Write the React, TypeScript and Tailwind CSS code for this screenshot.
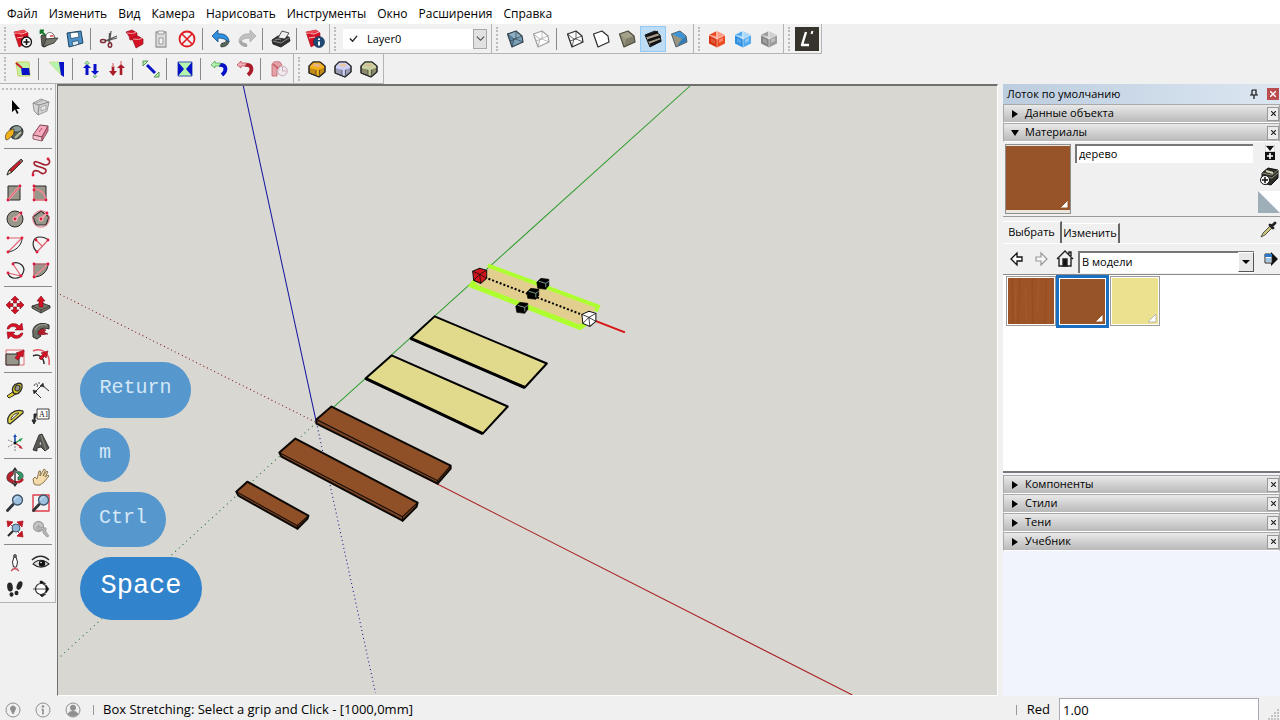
import { useState, type ReactNode } from "react";

const MENU = [
  "Файл",
  "Изменить",
  "Вид",
  "Камера",
  "Нарисовать",
  "Инструменты",
  "Окно",
  "Расширения",
  "Справка",
];

type Tool = { label: string; icon: ReactNode; active?: boolean };
type ToolGroup = Tool[][];

const RED = "#d41224";
const INK = "#2b2b2b";

/* ---------- shared icon pieces, all on a 24px grid ---------- */

function Svg({ children, className = "size-6" }: { children: ReactNode; className?: string }) {
  return (
    <svg viewBox="0 0 24 24" className={className} fill="none" stroke={INK} strokeLinejoin="round" aria-hidden="true">
      {children}
    </svg>
  );
}

// Small round handles that mark the picked points of the drawing tools.
function Dots({ at }: { at: [number, number][] }) {
  return (
    <>
      {at.map(([x, y]) => (
        <circle key={`${x}-${y}`} cx={x} cy={y} r="1.4" fill="#e0183c" stroke="none" />
      ))}
    </>
  );
}

type StyleCubeProps = { top: string; side: string; right: string; line?: string; wire?: boolean };

function StyleCube({ top, side, right, line = INK, wire }: StyleCubeProps) {
  return (
    <Svg>
      <path d="M4.500 7 13 4 19 9 20 15 9 20Z" fill={side} stroke="none" />
      <path d="M4.500 7 13 4 19 9 11 12Z" fill={top} stroke="none" />
      <path d="M11 12 19 9 20 15 9 20Z" fill={right} stroke="none" />
      {wire && <path d="M4.500 7 11 12 19 9M11 12 9 20M13 4V12L20 15M13 12 7 14" stroke={line} strokeWidth=".7" />}
      <path d="M4.500 7 13 4 19 9 20 15 9 20Z" stroke={line} strokeWidth="1.2" />
    </Svg>
  );
}

function GlassBox({ dark, mid, light }: { dark: string; mid: string; light: string }) {
  return (
    <Svg>
      <g stroke="none">
        <path d="M12 4 20 8 12 12 4 8Z" fill={light} />
        <path d="M4 8 12 12V20.500L4 16.500Z" fill={dark} />
        <path d="M20 8 12 12V20.500L20 16.500Z" fill={mid} />
        <path d="M4 8 11 4.500V9Z" fill={mid} />
        <path d="M14 12.500 18 10.500V14L14 16Z" fill={light} opacity=".7" />
        <path d="M6 11 10 13V17L6 15Z" fill={light} opacity=".35" />
      </g>
      <path d="M12 4V20M4 8 12 12 20 8" stroke="#fff" strokeOpacity=".6" strokeWidth=".8" />
    </Svg>
  );
}

function RoundedBox({ top, side, edge }: { top: string; side: string; edge: string }) {
  return (
    <Svg>
      <path d="M4 9 8 5H15L20 9V15L14 20 4 16Z" fill={side} />
      <path d="M6 9 9 6H14L18 9 13 11Z" fill={top} stroke={edge} strokeWidth="1.600" />
      <path d="M12.500 12V18.500M12 11.500 5 10M13 11.500 19 9.500" stroke={edge} strokeWidth="2.400" />
      <path d="M11 13V18.500M14.500 13V18.500" strokeWidth=".6" />
      <path d="M4 9 8 5H15L20 9V15L14 20 4 16Z" strokeWidth="1.100" />
    </Svg>
  );
}

function Doc({ children }: { children?: ReactNode }) {
  return (
    <Svg>
      <path d="M3 5 13 3 17 6V15L8 20 6 14Z" fill={RED} stroke="#a50f1f" strokeWidth=".6" />
      <path d="M3 6 11 7 16 5M6 11 12 10" stroke="#ffd6d8" strokeWidth=".9" />
      <path d="M3 5 13 3 15 4.500 6 7Z" fill="#ee4a55" stroke="none" />
      {children}
    </Svg>
  );
}

function Magnifier({ frame }: { frame?: ReactNode }) {
  return (
    <Svg>
      {frame}
      <path d="M4.500 19.500 10 13.500" stroke="#30343a" strokeWidth="2.800" strokeLinecap="round" />
      <circle cx="14.500" cy="9" r="5" fill="#9dc0df" stroke="#3f5468" strokeWidth="1.300" />
      <path d="M11.500 9C12 7 13 6 15 6" stroke="#dceaf5" />
    </Svg>
  );
}

/* ---------- toolbars ---------- */

const FILE_GROUP: ToolGroup = [
  [
    {
      label: "Создать",
      icon: (
        <Doc>
          <circle cx="15.500" cy="15" r="5" fill="#fff" stroke="#111" strokeWidth="1.300" />
          <path d="M12.500 15H18.500M15.500 12V18" stroke="#111" strokeWidth="1.600" />
        </Doc>
      ),
    },
    {
      label: "Открыть",
      icon: (
        <Svg>
          <path d="M4 9 5 8H9L16 7 18 11 8 20 5 19Z" fill="#5f5f57" strokeWidth=".8" />
          <path d="M9 8C11 4 17 4 18 12H9Z" fill="#fff" strokeWidth=".6" />
          <path d="M13 8 16 8 17 10 13 10Z" fill="#e87070" stroke="none" />
          <path d="M6 20 9 12 21 11 17 16Z" fill="#77776c" strokeWidth=".8" />
          <path d="M8 8 4 4M3.500 7V3.500H7" stroke="#167a2a" strokeWidth="1.800" />
        </Svg>
      ),
    },
    {
      label: "Сохранить",
      icon: (
        <Svg>
          <path d="M4 6 18 4 20 16 6 20Z" fill="#4c8fc9" stroke="#1f4460" />
          <path d="M7 6 15 5 16 10 8 11.500Z" fill="#fff" stroke="#1f4460" strokeWidth=".7" />
          <path d="M9 15 15 13.500 16 17 10 19Z" fill="#dceaf4" stroke="#1f4460" strokeWidth=".7" />
        </Svg>
      ),
    },
  ],
  [
    {
      label: "Вырезать",
      icon: (
        <Svg>
          <path d="M8 14 20 9M12.500 16 14 4M9 14 20 11M12 15 12.500 6" stroke="#555" strokeWidth="1.200" />
          <ellipse cx="6" cy="14" rx="2.500" ry="1.600" stroke="#7c2b35" strokeWidth="1.500" />
          <ellipse cx="13" cy="18" rx="1.700" ry="2.300" stroke="#7c2b35" strokeWidth="1.500" />
        </Svg>
      ),
    },
    {
      label: "Копировать",
      icon: (
        <Svg>
          <path d="M3 5 9 3 14 6V12L7 13 6 9Z" fill={RED} stroke="#8f1020" strokeWidth=".7" />
          <path d="M9 11 15 9 20 12V17L13 21 11 16Z" fill={RED} stroke="#8f1020" strokeWidth=".7" />
          <path d="M4 6 9 6.500 13 5.500M10 12 15 12.500 19 11.500" stroke="#ffd0d3" strokeWidth=".7" />
        </Svg>
      ),
    },
    {
      label: "Вставить",
      icon: (
        <Svg>
          <path d="M7 5H17V20H7Z" fill="#dcdcdc" stroke="#9a9a9a" strokeWidth="1.300" />
          <path d="M9 4H15V7H9ZM10 11H14V17H10Z" fill="#f3f3f3" stroke="#9a9a9a" />
        </Svg>
      ),
    },
    {
      label: "Стереть",
      icon: (
        <Svg>
          <circle cx="12" cy="12" r="7.500" stroke="#e01b22" strokeWidth="1.800" />
          <path d="M7 7 17 17M17 7 7 17" stroke="#e01b22" strokeWidth="1.600" />
        </Svg>
      ),
    },
  ],
  [
    {
      label: "Отменить",
      icon: (
        <Svg>
          <path d="M20 14C20 18 16 20 12 20 11 18 12 17 13 16 16 16 17 15 17 13Z" fill="#55675a" stroke="#333" strokeWidth=".6" />
          <path d="M3 9 9 3V7C15 6 20 9 20 15 17 12 13 11 9 11V15Z" fill="#2f8fe0" stroke="#1b4e80" strokeWidth=".8" />
        </Svg>
      ),
    },
    {
      label: "Вернуть",
      icon: (
        <Svg>
          <path d="M4 14C4 18 8 20 12 20 13 18 12 17 11 16 8 16 7 15 7 13Z" fill="#a8a8a8" stroke="none" />
          <path d="M21 9 15 3V7C9 6 4 9 4 15 7 12 11 11 15 11V15Z" fill="#c0c0c0" stroke="#a8a8a8" strokeWidth=".7" />
        </Svg>
      ),
    },
  ],
  [
    {
      label: "Печать",
      icon: (
        <Svg>
          <path d="M3 13 9 9 20 10 21 14 12 20 4 17Z" fill="#2f2f2f" />
          <path d="M9 11 13 4 20 6 16 12Z" fill="#eee" strokeWidth=".8" />
          <path d="M4 14 12 16 20 11" stroke="#9a9a9a" strokeWidth=".9" />
          <path d="M6 13 9 12 12 13" stroke="#888" strokeWidth="1.200" />
        </Svg>
      ),
    },
  ],
  [
    {
      label: "Информация о модели",
      icon: (
        <Doc>
          <circle cx="16" cy="15" r="5.500" fill="#1d4973" stroke="#12304e" strokeWidth=".6" />
          <path d="M16 14.500V18.500M16 11.500V13" stroke="#fff" strokeWidth="2" />
        </Doc>
      ),
    },
  ],
];

const FACE_GROUP: ToolGroup = [
  [
    { label: "Рентген", icon: <StyleCube top="#8fb0c4" side="#5c87a3" right="#7ba1b8" line="#34434d" wire /> },
    { label: "Задние кромки", icon: <StyleCube top="#fff" side="#f7f7f7" right="#fff" line="#a0a0a0" wire /> },
  ],
  [
    { label: "Каркас", icon: <StyleCube top="#fff" side="#f7f7f7" right="#fff" wire /> },
    { label: "Скрытые линии", icon: <StyleCube top="#fff" side="#fff" right="#fff" /> },
    { label: "Тонированный", icon: <StyleCube top="#a5a18b" side="#98947e" right="#817d68" line="#4c4a3e" /> },
    {
      label: "Тонированный с текстурами",
      active: true,
      icon: (
        <Svg>
          <path d="M4 8 14 4 19 8 20 14 9 20Z" fill="#a89d8c" stroke="#111" />
          <path d="M5 9 17 5M7 13.500 19 9.500M9 18 20 13.500" stroke="#111" strokeWidth="2.600" />
        </Svg>
      ),
    },
    {
      label: "Монохромный",
      icon: (
        <Svg>
          <path d="M4.500 7 13 4 19 9 20 15 9 20Z" fill="#9a9580" stroke="#4b5b66" />
          <path d="M5 7 13 4.500 18.500 9 15 12Z" fill="#3c93d8" stroke="none" />
          <path d="M10 19 15 12 19 9.500 19.500 14.500Z" fill="#2f7cb8" stroke="none" />
        </Svg>
      ),
    },
  ],
];

const BOX_GROUP: ToolGroup = [
  [
    { label: "Красный блок", icon: <GlassBox dark="#d8330f" mid="#ee4a22" light="#ff9d84" /> },
    { label: "Синий блок", icon: <GlassBox dark="#2c8ede" mid="#4fa9ee" light="#a9d8fb" /> },
    { label: "Серый блок", icon: <GlassBox dark="#858585" mid="#9c9c9c" light="#cfcfcf" /> },
  ],
];

const LIBRARY_GROUP: ToolGroup = [
  [
    {
      label: "Библиотека",
      icon: (
        <Svg>
          <rect width="24" height="24" fill="#35332c" stroke="none" />
          <path d="M11 5 7 18H14" stroke="#fff" strokeWidth="2.400" />
          <path d="M17.500 4 16.500 7" stroke="#fff" strokeWidth="2" />
        </Svg>
      ),
    },
  ],
];

const BLUE = "#0712c8";
const MINT = "#b4f5ae";

const PLUGIN_GROUP: ToolGroup = [
  [
    {
      label: "Box Stretching",
      icon: (
        <Svg>
          <path d="M5 5H18L19 19H7Z" fill="#c4f3a6" stroke="#c8c84a" strokeWidth=".8" />
          <path d="M10 11H18L19 18H11Z" fill={BLUE} stroke="none" />
          <path d="M11 11 5 6" stroke="#c4202c" strokeWidth="2.200" />
        </Svg>
      ),
    },
  ],
  [
    {
      label: "Растянуть грань",
      icon: (
        <Svg>
          <path d="M4 5H14L16 18Z" fill={MINT} stroke="#c9c95e" strokeWidth=".5" />
          <path d="M14 5H19V20L16 18Z" fill={BLUE} stroke="none" />
        </Svg>
      ),
    },
  ],
  [
    {
      label: "Поднять",
      icon: (
        <Svg>
          <path d="M8 18V9M16 7V15" stroke={BLUE} strokeWidth="3" />
          <path d="M4 11 8 7 12 11ZM12 14 16 18 20 14Z" fill={BLUE} stroke="none" />
          <path d="M6 6 8 4 10 6V7H6ZM14 19 16 21 18 19Z" fill={MINT} stroke="#6fae6f" strokeWidth=".8" />
        </Svg>
      ),
    },
    {
      label: "Опустить",
      icon: (
        <Svg>
          <path d="M8 9V15M16 11V18" stroke="#a81d29" strokeWidth="2.600" />
          <path d="M4 14 8 19 12 14ZM12 11 16 7 20 11Z" fill="#a81d29" stroke="none" />
          <path d="M8 6V10M16 4V7" stroke="#e89a9f" strokeWidth="1.800" />
        </Svg>
      ),
    },
  ],
  [
    {
      label: "По диагонали",
      icon: (
        <Svg>
          <path d="M8 8 16 16" stroke={BLUE} strokeWidth="3" />
          <path d="M4 4H9L4 9ZM20 20H15L20 15Z" fill={MINT} stroke="#4a8a4a" strokeWidth=".9" />
        </Svg>
      ),
    },
  ],
  [
    {
      label: "Отразить",
      icon: (
        <Svg>
          <path d="M5 5H19V19H5Z" fill={MINT} stroke="#3d53b5" />
          <path d="M5 5 11 12 5 19ZM19 5 13 12 19 19Z" fill={BLUE} stroke="none" />
        </Svg>
      ),
    },
  ],
  [
    {
      label: "Повернуть влево",
      icon: (
        <Svg>
          <path d="M12 8C20 7 20 14 15 18" stroke={BLUE} strokeWidth="3.800" />
          <path d="M4 8 8 4V6L14 6 12 9 8 9V11Z" fill={MINT} stroke="#4a9a4a" strokeWidth=".7" />
        </Svg>
      ),
    },
    {
      label: "Повернуть вправо",
      icon: (
        <Svg>
          <path d="M12 8C20 7 20 14 15 18" stroke="#a81d29" strokeWidth="3.800" />
          <path d="M4 8 8 4V6L14 6 12 9 8 9V11Z" fill="#f5b0b5" stroke="#b5404a" strokeWidth=".7" />
        </Svg>
      ),
    },
  ],
  [
    {
      label: "Изогнуть",
      icon: (
        <Svg>
          <path d="M5 19V8C5 5 8 4 13 5L15 8 10 11V19Z" fill="#e3a3a8" stroke="#c7606a" strokeWidth=".8" />
          <path d="M6 7 13 13" stroke="#c7505c" strokeWidth="1.400" />
          <circle cx="15.500" cy="14" r="4.800" fill="#f0e8ef" fillOpacity=".8" stroke="#c9a9b9" />
          <path d="M15.500 14V10M15.500 14H19" stroke="#c9a9b9" />
        </Svg>
      ),
    },
  ],
];

const CORNER_GROUP: ToolGroup = [
  [
    { label: "Скругление углов", icon: <RoundedBox top="#e7b48c" side="#c08a14" edge="#f3b21c" /> },
    { label: "Острые углы", icon: <RoundedBox top="#e8c7a4" side="#9c9cb8" edge="#cdd3fb" /> },
    { label: "Фаска", icon: <RoundedBox top="#d6bf98" side="#8b8b6c" edge="#c9d3a0" /> },
  ],
];

const DRAW_TOOLS: ToolGroup = [
  [
    {
      label: "Выбрать",
      icon: (
        <Svg>
          <path d="M9 5V17L12 14.500 14 19 15.500 18 13.500 14H17Z" fill="#000" stroke="none" />
        </Svg>
      ),
    },
    {
      label: "Создать компонент",
      icon: (
        <Svg>
          <path d="M4 8 12 4 20 7 18 16 9 20 5 16Z" fill="#d4d4d4" stroke="#999" />
          <path d="M4 8 10 10 20 7M10 10 9 20" stroke="#8f8f8f" strokeWidth="1.200" />
          <path d="M7 8 14 5M12 12 17 10V14L12 16Z" fill="#e8e8e8" stroke="#999" strokeWidth=".8" />
        </Svg>
      ),
    },
    {
      label: "Заливка",
      icon: (
        <Svg>
          <path d="M7 8C10 3 19 4 20 10 20 16 14 20 9 17Z" fill="#56605c" />
          <path d="M8 9C9 4 17 3 19 8 17 12 12 12 8 9Z" fill="#8b9d9c" strokeWidth=".8" />
          <path d="M11 8C11 11 11 14 9 15 7 16 6 19 3 19 1 14 4 9 11 8Z" fill="#f0b018" strokeWidth=".6" />
          <path d="M12 17 18 11" stroke="#b9c0a0" strokeWidth="2" />
        </Svg>
      ),
    },
    {
      label: "Ластик",
      icon: (
        <Svg>
          <path d="M4 14 11 4 19 5 13 16Z" fill="#f7a9bc" stroke="#7b4450" />
          <path d="M4 14 13 16V20L4 18Z" fill="#f7c2d0" stroke="#7b4450" strokeWidth=".8" />
          <path d="M13 16 19 5V10L13 20Z" fill="#d8738c" stroke="#7b4450" strokeWidth=".8" />
          <path d="M10 11 13 7" stroke="#b04a64" />
        </Svg>
      ),
    },
  ],
  [
    {
      label: "Линия",
      icon: (
        <Svg>
          <path d="M4 20 6 15 18 4 20 6 9 17Z" fill="#c51f2b" strokeWidth=".9" />
          <path d="M4 20 6 15 9 17Z" fill="#d8c9a5" strokeWidth=".8" />
          <path d="M17 5 19 7" stroke="#777" strokeWidth="1.600" />
        </Svg>
      ),
    },
    {
      label: "От руки",
      icon: (
        <Svg>
          <path d="M4 20C3 14 9 15 12 18 15 20 19 16 16 14 11 11 5 12 5 8 6 4 13 10 17 10 22 9 21 5 19 4" stroke="#a3202e" strokeWidth="1.600" />
          <Dots at={[[4, 20], [19, 4]]} />
        </Svg>
      ),
    },
    {
      label: "Прямоугольник",
      icon: (
        <Svg>
          <path d="M5 5H17V19H5Z" fill="#99978a" />
          <path d="M5 19 17 5" stroke="#f5a3ac" strokeWidth="2.400" />
          <path d="M5 19 17 5" stroke="#c5303e" strokeWidth=".7" />
          <Dots at={[[5, 19], [17, 5]]} />
        </Svg>
      ),
    },
    {
      label: "Повёрнутый прямоугольник",
      icon: (
        <Svg>
          <path d="M5 5H17V19H5Z" fill="#99978a" />
          <path d="M5 8C11 8 16 12 17 19M5 5V19H17" stroke="#f58a96" strokeWidth="1.500" />
          <Dots at={[[5, 5], [5, 9], [5, 19], [17, 19]]} />
        </Svg>
      ),
    },
    {
      label: "Круг",
      icon: (
        <Svg>
          <circle cx="12" cy="12" r="8" fill="#99978a" />
          <path d="M12 12 18 6" stroke="#f5a3ac" strokeWidth="2.200" />
          <circle cx="12" cy="12" r="2.500" fill="#f7b6bd" stroke="none" />
          <Dots at={[[12, 12], [18, 6]]} />
        </Svg>
      ),
    },
    {
      label: "Многоугольник",
      icon: (
        <Svg>
          <path d="M12 4 20 10 17 18H7L4 10Z" fill="#99978a" strokeWidth="1.200" />
          <circle cx="12" cy="12" r="8.200" stroke="#e0606e" strokeWidth=".9" />
          <path d="M12 12 18 6" stroke="#f5a3ac" strokeWidth="2.200" />
          <circle cx="12" cy="12" r="2.500" fill="#f7b6bd" stroke="none" />
          <Dots at={[[12, 12], [18, 6]]} />
        </Svg>
      ),
    },
    {
      label: "Дуга",
      icon: (
        <Svg>
          <path d="M19 5C19 12 13 18 5 19" />
          <path d="M5 5H19L5 19" stroke="#e0606e" strokeWidth="1.100" />
          <Dots at={[[5, 5], [19, 5], [5, 19]]} />
        </Svg>
      ),
    },
    {
      label: "Дуга по двум точкам",
      icon: (
        <Svg>
          <path d="M8 19C2 13 3 4 11 4 15 4 17 5 19 7" strokeWidth="1.200" />
          <path d="M8 19 19 7M7 7 13 13" stroke="#e0606e" strokeWidth="1.200" />
          <Dots at={[[8, 19], [19, 7], [7, 7]]} />
        </Svg>
      ),
    },
    {
      label: "Дуга по трём точкам",
      icon: (
        <Svg>
          <path d="M10 4C17 2 23 8 20 14 17 21 7 21 5 14" strokeWidth="1.200" />
          <path d="M10 5 18 17 5 14" stroke="#e0606e" strokeWidth="1.200" />
          <Dots at={[[10, 5], [18, 17], [5, 14]]} />
        </Svg>
      ),
    },
    {
      label: "Сектор",
      icon: (
        <Svg>
          <path d="M5 5H19C19 12 13 18 5 18Z" fill="#99978a" />
          <path d="M5 5H19L5 18Z" stroke="#f58a96" strokeWidth="1.200" />
          <Dots at={[[5, 5], [19, 5], [5, 18]]} />
        </Svg>
      ),
    },
  ],
  [
    {
      label: "Переместить",
      icon: (
        <Svg>
          <path d="M12 3 16 7H13.500V10H10.500V7H8ZM12 21 16 17H13.500V14H10.500V17H8ZM3 12 7 8V10.500H10V13.500H7V16ZM21 12 17 8V10.500H14V13.500H17V16Z" fill={RED} stroke="#7d0c18" strokeWidth=".6" />
        </Svg>
      ),
    },
    {
      label: "Тяни/Толкай",
      icon: (
        <Svg>
          <path d="M3 13 13 10 21 13V15L12 20 3 15Z" fill="#77776a" strokeWidth=".9" />
          <path d="M3 13 12 17 21 13M12 17V20" strokeWidth=".7" />
          <path d="M12 3 16 8H14V14H10V8H8Z" fill={RED} stroke="#7d0c18" strokeWidth=".6" />
        </Svg>
      ),
    },
    {
      label: "Повернуть",
      icon: (
        <Svg>
          <path d="M4 10C5 4 13 3 16 7L19 4 20 11 12 11 14 9C11 7 8 7 6 10Z" fill={RED} stroke="#7d0c18" strokeWidth=".5" />
          <path d="M20 14C19 20 11 21 8 17L5 20 4 13 12 13 10 15C13 17 16 17 18 14Z" fill={RED} stroke="#7d0c18" strokeWidth=".5" />
        </Svg>
      ),
    },
    {
      label: "Ведение",
      icon: (
        <Svg>
          <path d="M4 15C2 6 12 2 20 6L20 10C14 8 9 10 9 15L12 17 8 20 4 18Z" fill="#6c6e65" />
          <path d="M6 11C8 6 13 5 18 6" stroke="#a9a99c" />
          <path d="M9 14C10 10 14 9 17 11L15 13 19 15 11 16Z" fill="#b51c29" stroke="#5c0d14" strokeWidth=".5" />
        </Svg>
      ),
    },
    {
      label: "Масштаб",
      icon: (
        <Svg>
          <path d="M3 5H21V20H3Z" stroke="#e46a72" />
          <path d="M3 9H16V20H3Z" fill="#98968a" />
          <path d="M12 13 15 9 13 8 21 5 20 12 18 11 15 15Z" fill={RED} stroke="#7d0c18" strokeWidth=".6" />
        </Svg>
      ),
    },
    {
      label: "Смещение",
      icon: (
        <Svg>
          <path d="M4 6C13 2 22 9 20 20" stroke="#e2545e" strokeWidth="1.500" />
          <path d="M4 11C10 8 15 13 15 19" strokeWidth="1.400" />
          <path d="M10 13 14 9 12 8 19 6 17 13 16 11 12 15Z" fill={RED} stroke="#7d0c18" strokeWidth=".6" />
        </Svg>
      ),
    },
  ],
  [
    {
      label: "Рулетка",
      icon: (
        <Svg>
          <path d="M4 17 11 12 13 15 6 19Z" fill="#e5d32c" />
          <path d="M10 8C12 4 18 3 19 6 20 10 16 15 13 15 9 15 9 10 10 8Z" fill="#d6c52c" strokeWidth="1.300" />
          <ellipse cx="14.500" cy="9" rx="2.300" ry="3" fill="#9a9a8f" transform="rotate(30 14.500 9)" />
        </Svg>
      ),
    },
    {
      label: "Размеры",
      icon: (
        <Svg>
          <path d="M6 13 13 6M6 13 12 19M13 6 20 12" strokeWidth="1" />
          <path d="M5 7C6 3 10 5 8 8M9 4 11 4" strokeWidth=".8" />
          <path d="M14 4 15 8 11 7ZM5 15 4 11 8 12Z" fill={INK} strokeWidth=".5" />
        </Svg>
      ),
    },
    {
      label: "Транспортир",
      icon: (
        <Svg>
          <path d="M5 18C3 11 11 3 20 6L20 8 7 19Z" fill="#ddd04a" strokeWidth="1.200" />
          <path d="M8 15C8 11 12 8 16 8Z" fill="#f2f2f2" strokeWidth=".9" />
        </Svg>
      ),
    },
    {
      label: "Текст",
      icon: (
        <Svg>
          <path d="M8 4H20V14H8Z" fill="#fff" strokeWidth=".9" />
          <path d="M8 9H5V18M3 15 5 19 7 15Z" fill={INK} />
          <text x="10" y="12" fontSize="8" stroke="none" fill="#111" fontFamily="Liberation Serif, serif">
            A1
          </text>
        </Svg>
      ),
    },
    {
      label: "Оси",
      icon: (
        <Svg>
          <path d="M12 12V5" stroke="#1c4fae" strokeWidth="1.600" />
          <path d="M12 12 18 16" stroke="#bf2b35" strokeWidth="1.400" />
          <path d="M12 12 17 9" stroke="#249c50" strokeWidth="1.400" />
          <path d="M12 12 5 16M12 12 5 9M12 12V20" stroke="#666" strokeDasharray="2 1" strokeWidth=".8" />
          <path d="M10 6 12 3 14 6Z" fill="#1c4fae" stroke="none" />
          <path d="M17 14 20 18 16 17Z" fill="#bf2b35" stroke="none" />
          <path d="M16 8 20 7 17 11Z" fill="#249c50" stroke="none" />
          <circle cx="12" cy="12" r="1.300" fill="#111" stroke="none" />
        </Svg>
      ),
    },
    {
      label: "Объёмный текст",
      icon: (
        <Svg>
          <path d="M10 4 13 3 20 17 16 20 12 16 8 17V20L4 19Z" fill="#5a5a54" strokeWidth=".9" />
          <path d="M10 14 11 9 13 14Z" fill="#ddd" strokeWidth=".6" />
          <path d="M12 4 17 19" stroke="#8c8c80" />
        </Svg>
      ),
    },
  ],
  [
    {
      label: "Орбита",
      icon: (
        <Svg>
          <path d="M13 7C19 5 22 11 19 14L15 15V12L17 11Z" fill="#2f9b66" strokeWidth=".6" />
          <path d="M11 6C5 6 2 12 5 16L10 19V15L7 13 10 10Z" fill="#b6222e" strokeWidth=".6" />
          <path d="M9 16C14 18 18 17 20 14" stroke="#b6222e" strokeWidth="2.400" />
          <path d="M12 3V21M10 6 12 3 14 6M10 18 12 21 14 18" strokeWidth="1.300" />
        </Svg>
      ),
    },
    {
      label: "Панорама",
      icon: (
        <Svg>
          <path d="M5 19 4 14 6 12 8 14 10 6 11.500 6 11 11 15 4 16.500 5 14 11 18 6 19 7 16 12 19 10 20 11 15 17 11 20 7 20Z" fill="#f5dcab" stroke="#806a45" strokeWidth=".9" />
        </Svg>
      ),
    },
    { label: "Лупа", icon: <Magnifier /> },
    {
      label: "Окно масштаба",
      icon: <Magnifier frame={<path d="M4 4H20V20H4Z" stroke="#dc3e4c" strokeWidth="1.400" />} />,
    },
    {
      label: "В размер окна",
      icon: (
        <Svg>
          <path d="M5 19 10 14" strokeWidth="2.200" />
          <circle cx="13" cy="11" r="4" fill="#91b5d4" stroke="#3f5468" />
          <path d="M4 4 10 5 5 10ZM20 4 19 10 14 5ZM20 20 14 19 19 14ZM6 6 9 9M18 6 16 8M18 18 15 15" fill="#c11c2a" stroke="#c11c2a" strokeWidth=".9" />
        </Svg>
      ),
    },
    {
      label: "Предыдущий вид",
      icon: (
        <Svg>
          <circle cx="9.500" cy="9.500" r="5" fill="#c6c6c6" stroke="#a4a4a4" strokeWidth="1.300" />
          <path d="M7 11 10 8V10L17 11V15L20 19 18 20 14 16 14 13H10V14Z" fill="#b4b4b4" stroke="#9a9a9a" strokeWidth=".8" />
        </Svg>
      ),
    },
  ],
  [
    {
      label: "Положение камеры",
      icon: (
        <Svg>
          <path d="M11 6H13L14.500 11 13.500 16H10.500L9.500 11Z" fill="#fff" />
          <circle cx="12" cy="5" r="1.400" fill="#888" strokeWidth=".8" />
          <path d="M8 20 12 17 16 20M9 18H15" stroke="#c94b55" strokeWidth="1.200" />
        </Svg>
      ),
    },
    {
      label: "Осмотреться",
      icon: (
        <Svg>
          <path d="M3 9C8 4 15 4 20 9" strokeWidth="1.600" />
          <path d="M4 13C8 8 15 8 20 13 15 17 9 17 4 13Z" fill="#ddd" strokeWidth="1.200" />
          <circle cx="13" cy="12.500" r="3.200" fill="#111" stroke="none" />
          <circle cx="12" cy="11.500" r=".8" fill="#fff" stroke="none" />
        </Svg>
      ),
    },
    {
      label: "Прогулка",
      icon: (
        <Svg>
          <g fill="#272727" stroke="none">
            <ellipse cx="7" cy="10" rx="2.800" ry="4.500" transform="rotate(-8 7 10)" />
            <ellipse cx="8.500" cy="17.500" rx="2" ry="2.200" />
            <ellipse cx="16.500" cy="8.500" rx="2.600" ry="4.500" transform="rotate(22 16.500 8.500)" />
            <ellipse cx="13.500" cy="16" rx="2" ry="2.200" />
          </g>
        </Svg>
      ),
    },
    {
      label: "Сечение",
      icon: (
        <Svg>
          <circle cx="12" cy="12" r="5.500" fill="#fff" strokeWidth="1.200" />
          <path d="M4 12H19" strokeWidth=".8" />
          <path d="M11 4 13 4 17 7 11 6ZM17 8 20 12 17 16ZM11 18 17 17 13 20Z" fill="#111" strokeWidth=".5" />
        </Svg>
      ),
    },
  ],
];

function ToolButton({ tool }: { tool: Tool }) {
  return (
    <button
      type="button"
      aria-label={tool.label}
      aria-pressed={tool.active}
      className={
        tool.active
          ? "flex size-[26px] items-center justify-center border border-[#90c8f6] bg-[#bfdcf5]"
          : "flex size-[26px] items-center justify-center"
      }
    >
      {tool.icon}
    </button>
  );
}

function Grip() {
  return <span className="mr-1 ml-1 h-6 w-[2px] border-l-2 border-dotted border-[#bcbcbc]" />;
}

function Toolbar({ groups }: { groups: ToolGroup }) {
  return (
    <div role="toolbar" className="flex h-[30px] items-center border-r border-b border-[#b4b4b4] bg-[#f1f1f1] pr-px">
      <Grip />
      {groups.map((tools, i) => (
        <div key={i} className="flex items-center">
          {i > 0 && <span className="mr-[5px] ml-[2px] h-[22px] w-px bg-[#8a8a8a]" />}
          {tools.map((tool) => (
            <ToolButton key={tool.label} tool={tool} />
          ))}
        </div>
      ))}
    </div>
  );
}

function LayerPicker() {
  return (
    <div className="flex h-[30px] items-center border-r border-b border-[#b4b4b4] bg-[#f1f1f1] pr-1">
      <Grip />
      <div className="relative ml-[3px] flex h-5 w-36 items-center bg-white">
        <svg viewBox="0 0 10 10" className="pointer-events-none absolute left-[6px] size-[9px]" fill="none" stroke="#222" strokeWidth="1.400" aria-hidden="true">
          <path d="M1 5 4 8 9 2" />
        </svg>
        <select aria-label="Слой" className="h-5 w-full appearance-none bg-transparent pt-px pl-6 text-[11px]">
          <option>Layer0</option>
        </select>
        <span className="pointer-events-none absolute right-0 flex h-5 w-[14px] items-center justify-center border border-[#a8a8a8] bg-[#e1e1e1]">
          <svg viewBox="0 0 10 10" className="size-[9px]" fill="none" stroke="#444" strokeWidth="1.200" aria-hidden="true">
            <path d="M1 3 5 7 9 3" />
          </svg>
        </span>
      </div>
    </div>
  );
}

function ToolPalette() {
  return (
    <aside className="w-[57px] shrink-0 bg-[#f0f0f0]">
      <div role="toolbar" className="w-14 border-r border-b border-[#b4b4b4] bg-[#f3f3f3] pl-[2px]">
        <div className="flex h-[10px] items-center">
          <span className="h-[2px] w-[50px] border-t-2 border-dotted border-[#bcbcbc]" />
        </div>
        {DRAW_TOOLS.map((tools, i) => (
          <div key={i}>
            {i > 0 && (
              <div className="flex h-2 items-start pt-[2px] pl-[2px]">
                <span className="h-px w-12 bg-[#8a8a8a]" />
              </div>
            )}
            <div className="grid w-[52px] grid-cols-2">
              {tools.map((tool) => (
                <ToolButton key={tool.label} tool={tool} />
              ))}
            </div>
          </div>
        ))}
      </div>
    </aside>
  );
}

/* ---------- model viewport ---------- */

type Board = { top: string; body: string; edge: string };

const WOOD: Board[] = [
  {
    top: "316,419 331,406 450,465 437,480",
    body: "316,419 331,406 450,465 450,468 437,483 316,423",
    edge: "M316 419 437 480 450 465M437 480V484",
  },
  {
    top: "279,452 295,438 417,502 402,516",
    body: "279,452 295,438 417,502 416,506 402,520 281,456",
    edge: "M279 452 402 516 417 502M402 516V521",
  },
  {
    top: "236,491 247,481 308,515 297,525",
    body: "236,491 247,481 308,515 307,518 297,528 238,495",
    edge: "M236 491 297 525 308 515M297 525V529",
  },
];

function GripCube({ x, y }: { x: number; y: number }) {
  return (
    <g transform={`translate(${x} ${y})`}>
      <path d="M-6-1-2-5 6-4 6 2 3 6-5 5Z" fill="#000" stroke="#000" strokeWidth=".6" />
      <path d="M-4-2 3 0 6-2M3 0V4" stroke="#86a898" strokeWidth=".9" fill="none" />
    </g>
  );
}

function CornerCube({ x, y, fill }: { x: number; y: number; fill: string }) {
  return (
    <g transform={`translate(${x} ${y})`} stroke="#111" strokeWidth="1">
      <path d="M-7-4 0-7 7-5 7 3 1 8-6 5Z" fill={fill} />
      <path d="M-7-4 0-1 7-5M0-1 1 8M-6 5 0-1 7 3" fill="none" strokeWidth=".8" />
    </g>
  );
}

function Model() {
  return (
    <svg viewBox="58 86 938 608" preserveAspectRatio="xMinYMin slice" className="block h-full w-full" fill="none" role="img" aria-label="Модель">
      <g strokeWidth="1">
        <path d="M243 86 316 422" stroke="#1414a0" />
        <path d="M316 422 689 86" stroke="#2f9e2f" />
        <path d="M316 422 851 694" stroke="#a81c1c" />
        <path d="M316 422 375 692" stroke="#0c0c90" strokeDasharray="1 3" />
        <path d="M316 422 60 656" stroke="#1c6e1c" strokeDasharray="1 4" />
        <path d="M60 294 316 422" stroke="#800f0f" strokeDasharray="1 3" />
      </g>

      {WOOD.map((board) => (
        <g key={board.top} stroke="#0c0805">
          <polygon points={board.body} fill="#7a4526" stroke="none" />
          <polygon points={board.top} fill="#8f4f27" stroke="none" />
          <path d={board.edge} strokeWidth="1" />
          <polygon points={board.body} strokeWidth="2" strokeLinejoin="round" />
        </g>
      ))}

      <g fill="#e1d98b" stroke="#000" strokeWidth="2" strokeLinejoin="round">
        <polygon points="434,316 546,363 524,387 410,338" />
        <polygon points="391,355 507,406 482,433 365,378" />
        <path d="M410 338 524 387M365 378 482 433" strokeWidth="3" />
      </g>

      <polygon points="490,267 597,307 580,327 471,284" fill="#e2cf8f" />
      <path d="M487 265 597 306 595 311" stroke="#adff2f" strokeWidth="4" />
      <path d="M474 281 471 285 579 327 585 323" stroke="#adff2f" strokeWidth="5" />
      <path d="M484 277 583 315" stroke="#000" strokeWidth="2" strokeDasharray="2 2" />
      <path d="M588 318 624 332" stroke="#d81414" strokeWidth="2" />
      <GripCube x={542} y={283} />
      <GripCube x={532} y={293} />
      <GripCube x={521} y={307} />
      <CornerCube x={479} y={275} fill="#d3161c" />
      <CornerCube x={588} y={318} fill="#fff" />
    </svg>
  );
}

// Recently pressed keys, the newest one at the bottom and the largest.
function KeyLog() {
  return (
    <div className="absolute bottom-[75px] left-[22px] flex flex-col items-start gap-[10px] font-['Liberation_Mono',monospace] text-xl text-[#d5e8f7]">
      <kbd className="flex h-14 w-[111px] items-center justify-center rounded-full bg-[#5697cd] pb-1 font-[inherit]">Return</kbd>
      <kbd className="flex h-[54px] w-[50px] items-center justify-center rounded-[50%] bg-[#5697cd] pb-1 font-[inherit]">m</kbd>
      <kbd className="flex h-[55px] w-[86px] items-center justify-center rounded-full bg-[#5697cd] pb-1 font-[inherit]">Ctrl</kbd>
      <kbd className="flex h-[63px] w-[122px] items-center justify-center rounded-full bg-[#3183cb] pb-1 font-[inherit] text-[27px] text-white">Space</kbd>
    </div>
  );
}

/* ---------- right tray ---------- */

function TrayHeader({ title, open, onToggle }: { title: string; open?: boolean; onToggle?: () => void }) {
  return (
    <div className="flex h-[19px] items-center border border-[#a9a9a9] border-b-white bg-linear-to-b from-[#e9e9e9] to-[#b9b9b9] pl-[7px]">
      <button type="button" onClick={onToggle} aria-expanded={!!open} className="flex flex-1 items-center gap-[6px] text-left text-[11px]">
        <svg viewBox="0 0 8 8" className="size-2" aria-hidden="true">
          <path d={open ? "M0 1H8L4 7Z" : "M1 0V8L7 4Z"} />
        </svg>
        {title}
      </button>
      <button type="button" aria-label={`Закрыть: ${title}`} className="flex h-[14px] w-3 items-center justify-center border border-[#999] bg-[#ececec]">
        <svg viewBox="0 0 6 6" className="size-[5px]" stroke="#222" strokeWidth="1.400" aria-hidden="true">
          <path d="M0 0 6 6M6 0 0 6" />
        </svg>
      </button>
    </div>
  );
}

function Fold({ line = "#b8b8b8" }: { line?: string }) {
  return (
    <svg viewBox="0 0 10 10" className="size-[10px]" aria-hidden="true">
      <path d="M9 1V9H1Z" fill="#fff" stroke={line} />
    </svg>
  );
}

function Materials() {
  const [picked, setPicked] = useState("brown");

  return (
    <>
      <div className="flex h-[75px] border-b border-[#9a9a9a] pt-[2px] pl-[2px]">
        <div className="h-[70px] w-[66px] border border-[#8f8f8f] bg-[#ece6e0] pt-px pb-[3px]">
          <div className="flex h-full items-end justify-end bg-[#975428] p-px">
            <Fold line="#975428" />
          </div>
        </div>
        <input
          aria-label="Название материала"
          defaultValue="дерево"
          className="ml-1 h-[19px] min-w-0 flex-1 border-t-2 border-l-2 border-[#777] bg-white pb-[2px] pl-[2px] text-[11px]"
        />
        <div className="ml-[5px] flex w-[22px] flex-col items-end">
          <button type="button" aria-label="Дополнительно" className="mt-px mr-[5px]">
            <svg viewBox="0 0 10 16" className="h-4 w-[10px]" aria-hidden="true">
              <path d="M0 0H10V7H0Z" fill="#fff" stroke="#888" strokeWidth=".6" />
              <path d="M1 1H9L5 6Z" fill="#111" />
              <path d="M0 7H10V15H0Z" fill="#111" />
              <path d="M2 11H8M5 8V14" stroke="#fff" strokeWidth="1.600" />
            </svg>
          </button>
          <button type="button" aria-label="Создать материал" className="mt-[6px] mr-px">
            <svg viewBox="0 0 20 20" className="size-5" aria-hidden="true">
              <path d="M3 6 9 1 19 3V11L12 18 3 16Z" fill="#2c2c26" stroke="#111" />
              <path d="M3 6 13 8 19 3M4 9 13 11 19 6" stroke="#a9aa90" strokeWidth=".8" fill="none" />
              <path d="M7 4 14 6" stroke="#d4d6bd" strokeWidth="2" />
              <circle cx="6" cy="13" r="4.500" fill="#fff" stroke="#111" />
              <path d="M3 13H9M6 10V16" stroke="#111" strokeWidth="1.500" />
            </svg>
          </button>
          <svg viewBox="0 0 22 22" className="mt-1 size-[22px]" aria-hidden="true">
            <path d="M0 0H22V22Z" fill="#fff" />
            <path d="M0 0 22 22H0Z" fill="#9fafb9" />
          </svg>
        </div>
      </div>

      <div className="flex h-[27px] items-end border-b border-white pt-1 text-[11px]">
        <button type="button" className="h-[22px] w-[59px] border-t border-r-2 border-white border-r-[#666]">
          Выбрать
        </button>
        <button type="button" className="h-5 w-[58px] border-t border-r-2 border-white border-r-[#666]">
          Изменить
        </button>
        <button type="button" aria-label="Пипетка" className="mr-[2px] mb-[5px] ml-auto">
          <svg viewBox="0 0 18 18" className="size-[18px]" aria-hidden="true">
            <path d="M1 17 3 13 10 6 12 8 5 15Z" fill="#c9c27a" stroke="#333" strokeWidth=".8" />
            <path d="M10 5 13 8M12 6 15 3" stroke="#222" strokeWidth="2.800" strokeLinecap="round" />
          </svg>
        </button>
      </div>

      <div className="flex h-[31px] items-center border-b border-[#8a8a8a] pl-[6px]">
        <button type="button" aria-label="Назад">
          <svg viewBox="0 0 16 16" className="size-4" fill="#fff" stroke="#111" strokeWidth="1.300" aria-hidden="true">
            <path d="M2 8 8 2V6H13V10H8V14Z" />
          </svg>
        </button>
        <button type="button" aria-label="Вперёд" className="ml-2">
          <svg viewBox="0 0 16 16" className="size-4" fill="#f6f6f6" stroke="#999" strokeWidth="1.200" aria-hidden="true">
            <path d="M14 8 8 2V6H3V10H8V14Z" />
          </svg>
        </button>
        <button type="button" aria-label="В модели" className="ml-[7px]">
          <svg viewBox="0 0 18 18" className="size-[18px]" fill="none" stroke="#222" strokeWidth="1.400" aria-hidden="true">
            <path d="M1 9 9 1 17 9M3 8V16H15V8M13 4V2H15V6" />
            <path d="M7 16V9H11V16Z" fill="#111" />
          </svg>
        </button>
        <div className="relative mt-[5px] ml-1 flex h-[22px] flex-1 items-center">
          <select aria-label="Коллекция" className="h-[22px] w-full appearance-none border-t-2 border-l-2 border-[#777] bg-white pl-[2px] text-[11px]">
            <option>В модели</option>
          </select>
          <span className="pointer-events-none absolute right-0 flex h-5 w-4 items-center justify-center border border-white border-r-[#555] border-b-[#555] bg-[#e8e8e8]">
            <svg viewBox="0 0 8 8" className="size-2" aria-hidden="true">
              <path d="M0 2H8L4 6Z" />
            </svg>
          </span>
        </div>
        <button type="button" aria-label="Подробнее" className="mr-px ml-[9px]">
          <svg viewBox="0 0 16 16" className="size-4" aria-hidden="true">
            <path d="M8 1 15 8 8 15V12H6V4H8Z" fill="#111" />
            <path d="M2 3H9V12H2Z" fill="#fff" stroke="#222" />
            <path d="M2 3H9V6H2Z" fill="#2b79c4" />
            <path d="M3 8H8M3 10H8" stroke="#4b8fcc" />
          </svg>
        </button>
      </div>

      <div className="flex h-[196px] items-start bg-white pl-[3px]">
        <Swatch name="Дерево с текстурой" selected={picked === "grain"} onPick={() => setPicked("grain")}>
          <svg viewBox="0 0 46 46" className="size-full" preserveAspectRatio="none" fill="none" aria-hidden="true">
            <rect width="46" height="46" fill="#9d5325" />
            <path d="M4 0 5 46M12 0 10 46M24 0 25 46M38 0 37 46" stroke="#87421b" strokeOpacity=".4" />
            <path d="M8 5 7 40M17 10 19 46M31 0 29 35M42 4 41 46" stroke="#b0683a" strokeOpacity=".4" />
          </svg>
        </Swatch>
        <Swatch name="дерево" selected={picked === "brown"} onPick={() => setPicked("brown")}>
          <span className="flex size-full items-end justify-end bg-[#975428] p-px">
            <Fold line="#975428" />
          </span>
        </Swatch>
        <Swatch name="Светлый" selected={picked === "light"} onPick={() => setPicked("light")}>
          <span className="flex size-full items-end justify-end bg-[#ebe18e] p-px">
            <Fold />
          </span>
        </Swatch>
      </div>
    </>
  );
}

type SwatchProps = { name: string; selected: boolean; onPick: () => void; children: ReactNode };

function Swatch({ name, selected, onPick, children }: SwatchProps) {
  return (
    <button
      type="button"
      aria-label={name}
      aria-pressed={selected}
      onClick={onPick}
      className={
        selected
          ? "mr-px size-[53px] border-3 border-[#1a6fc0] bg-white p-px"
          : "mt-px size-[50px] border border-[#9a9a9a] bg-white p-px"
      }
    >
      {children}
    </button>
  );
}

function Tray() {
  const [open, setOpen] = useState(true);

  return (
    <aside className="flex w-[277px] shrink-0 flex-col bg-[#f1f4fc]">
      <div className="flex h-5 items-center bg-linear-to-r from-[#bccddf] to-[#dce6f1] pl-1">
        <h2 className="flex-1 text-[11px]">Лоток по умолчанию</h2>
        <button type="button" aria-label="Закрепить">
          <svg viewBox="0 0 10 10" className="size-[10px]" stroke="#111" fill="none" aria-hidden="true">
            <path d="M3 1H7V6M3 1V6M1 6H9M5 6V10" strokeWidth="1.200" />
          </svg>
        </button>
        <button type="button" aria-label="Закрыть" className="mr-px ml-2 flex size-3 items-center justify-center bg-[#bb4d50]">
          <svg viewBox="0 0 6 6" className="size-[6px]" stroke="#fff" strokeWidth="1.400" aria-hidden="true">
            <path d="M0 0 6 6M6 0 0 6" />
          </svg>
        </button>
      </div>
      <TrayHeader title="Данные объекта" />
      <TrayHeader title="Материалы" open={open} onToggle={() => setOpen(!open)} />
      {open && (
        <div className="mb-[2px] border-b-2 border-[#777] bg-[#f0f0f0]">
          <Materials />
        </div>
      )}
      <TrayHeader title="Компоненты" />
      <TrayHeader title="Стили" />
      <TrayHeader title="Тени" />
      <TrayHeader title="Учебник" />
    </aside>
  );
}

function StatusIcon({ label, children }: { label: string; children: ReactNode }) {
  return (
    <button type="button" aria-label={label}>
      <svg viewBox="0 0 16 16" className="size-4" fill="none" stroke="#8f8f8f" aria-hidden="true">
        <circle cx="8" cy="8" r="7" />
        {children}
      </svg>
    </button>
  );
}

function StatusBar() {
  return (
    <footer className="flex h-6 shrink-0 items-center bg-[#f0f0f0] pt-1 pl-[5px] text-[13px]">
      <div className="flex gap-[14px]">
        <StatusIcon label="Геопозиция">
          <path d="M8 12 6 8A2.500 2.500 0 1 1 10 8Z" fill="#8f8f8f" />
        </StatusIcon>
        <StatusIcon label="Авторство">
          <circle cx="8" cy="4.500" r="1.300" fill="#8f8f8f" stroke="none" />
          <path d="M8 7V12.500M6.500 7.500H8" strokeWidth="1.600" />
        </StatusIcon>
        <StatusIcon label="Вход">
          <circle cx="8" cy="5.800" r="2.600" fill="#8f8f8f" />
          <path d="M3 12C4 8.500 12 8.500 13 12A7 7 0 0 1 3 12Z" fill="#8f8f8f" />
        </StatusIcon>
      </div>
      <span className="ml-3 h-[10px] w-px bg-[#999]" />
      <p className="ml-[9px] flex-1">Box Stretching: Select a grip and Click - [1000,0mm]</p>
      <span className="mr-[10px] h-[10px] w-px bg-[#999]" />
      <label htmlFor="measure">Red</label>
      <input
        id="measure"
        defaultValue="1.00"
        className="ml-[9px] h-[22px] w-[200px] self-end border border-b-0 border-[#a5abb5] bg-white px-[3px]"
      />
      <svg viewBox="0 0 12 12" className="ml-[9px] size-3 self-end" fill="#c4c4c4" aria-hidden="true">
        <path d="M9 1H11V3H9ZM6 4H8V6H6ZM9 4H11V6H9ZM3 7H5V9H3ZM6 7H8V9H6ZM9 7H11V9H9ZM0 10H2V12H0ZM3 10H5V12H3ZM6 10H8V12H6ZM9 10H11V12H9Z" />
      </svg>
    </footer>
  );
}

export default function App() {
  return (
    <div className="flex h-screen flex-col overflow-hidden bg-[#f0f0f0] font-['Open_Sans','Noto_Sans',sans-serif] text-black">
      <nav className="flex h-6 shrink-0 items-center gap-[11px] bg-white pt-1 pl-[7px] text-xs">
        {MENU.map((item) => (
          <button key={item} type="button">
            {item}
          </button>
        ))}
      </nav>

      <header className="shrink-0">
        <div className="flex">
          <Toolbar groups={FILE_GROUP} />
          <LayerPicker />
          <Toolbar groups={FACE_GROUP} />
          <Toolbar groups={BOX_GROUP} />
          <Toolbar groups={LIBRARY_GROUP} />
        </div>
        <div className="flex">
          <Toolbar groups={PLUGIN_GROUP} />
          <Toolbar groups={CORNER_GROUP} />
        </div>
      </header>

      <div className="flex min-h-0 flex-1">
        <ToolPalette />
        <main className="relative mr-[5px] min-w-0 flex-1 border-t-2 border-r border-b border-l border-[#6f6f6f] border-r-white border-b-white bg-[#d8d7d2]">
          <Model />
          <KeyLog />
        </main>
        <Tray />
      </div>

      <StatusBar />
    </div>
  );
}
